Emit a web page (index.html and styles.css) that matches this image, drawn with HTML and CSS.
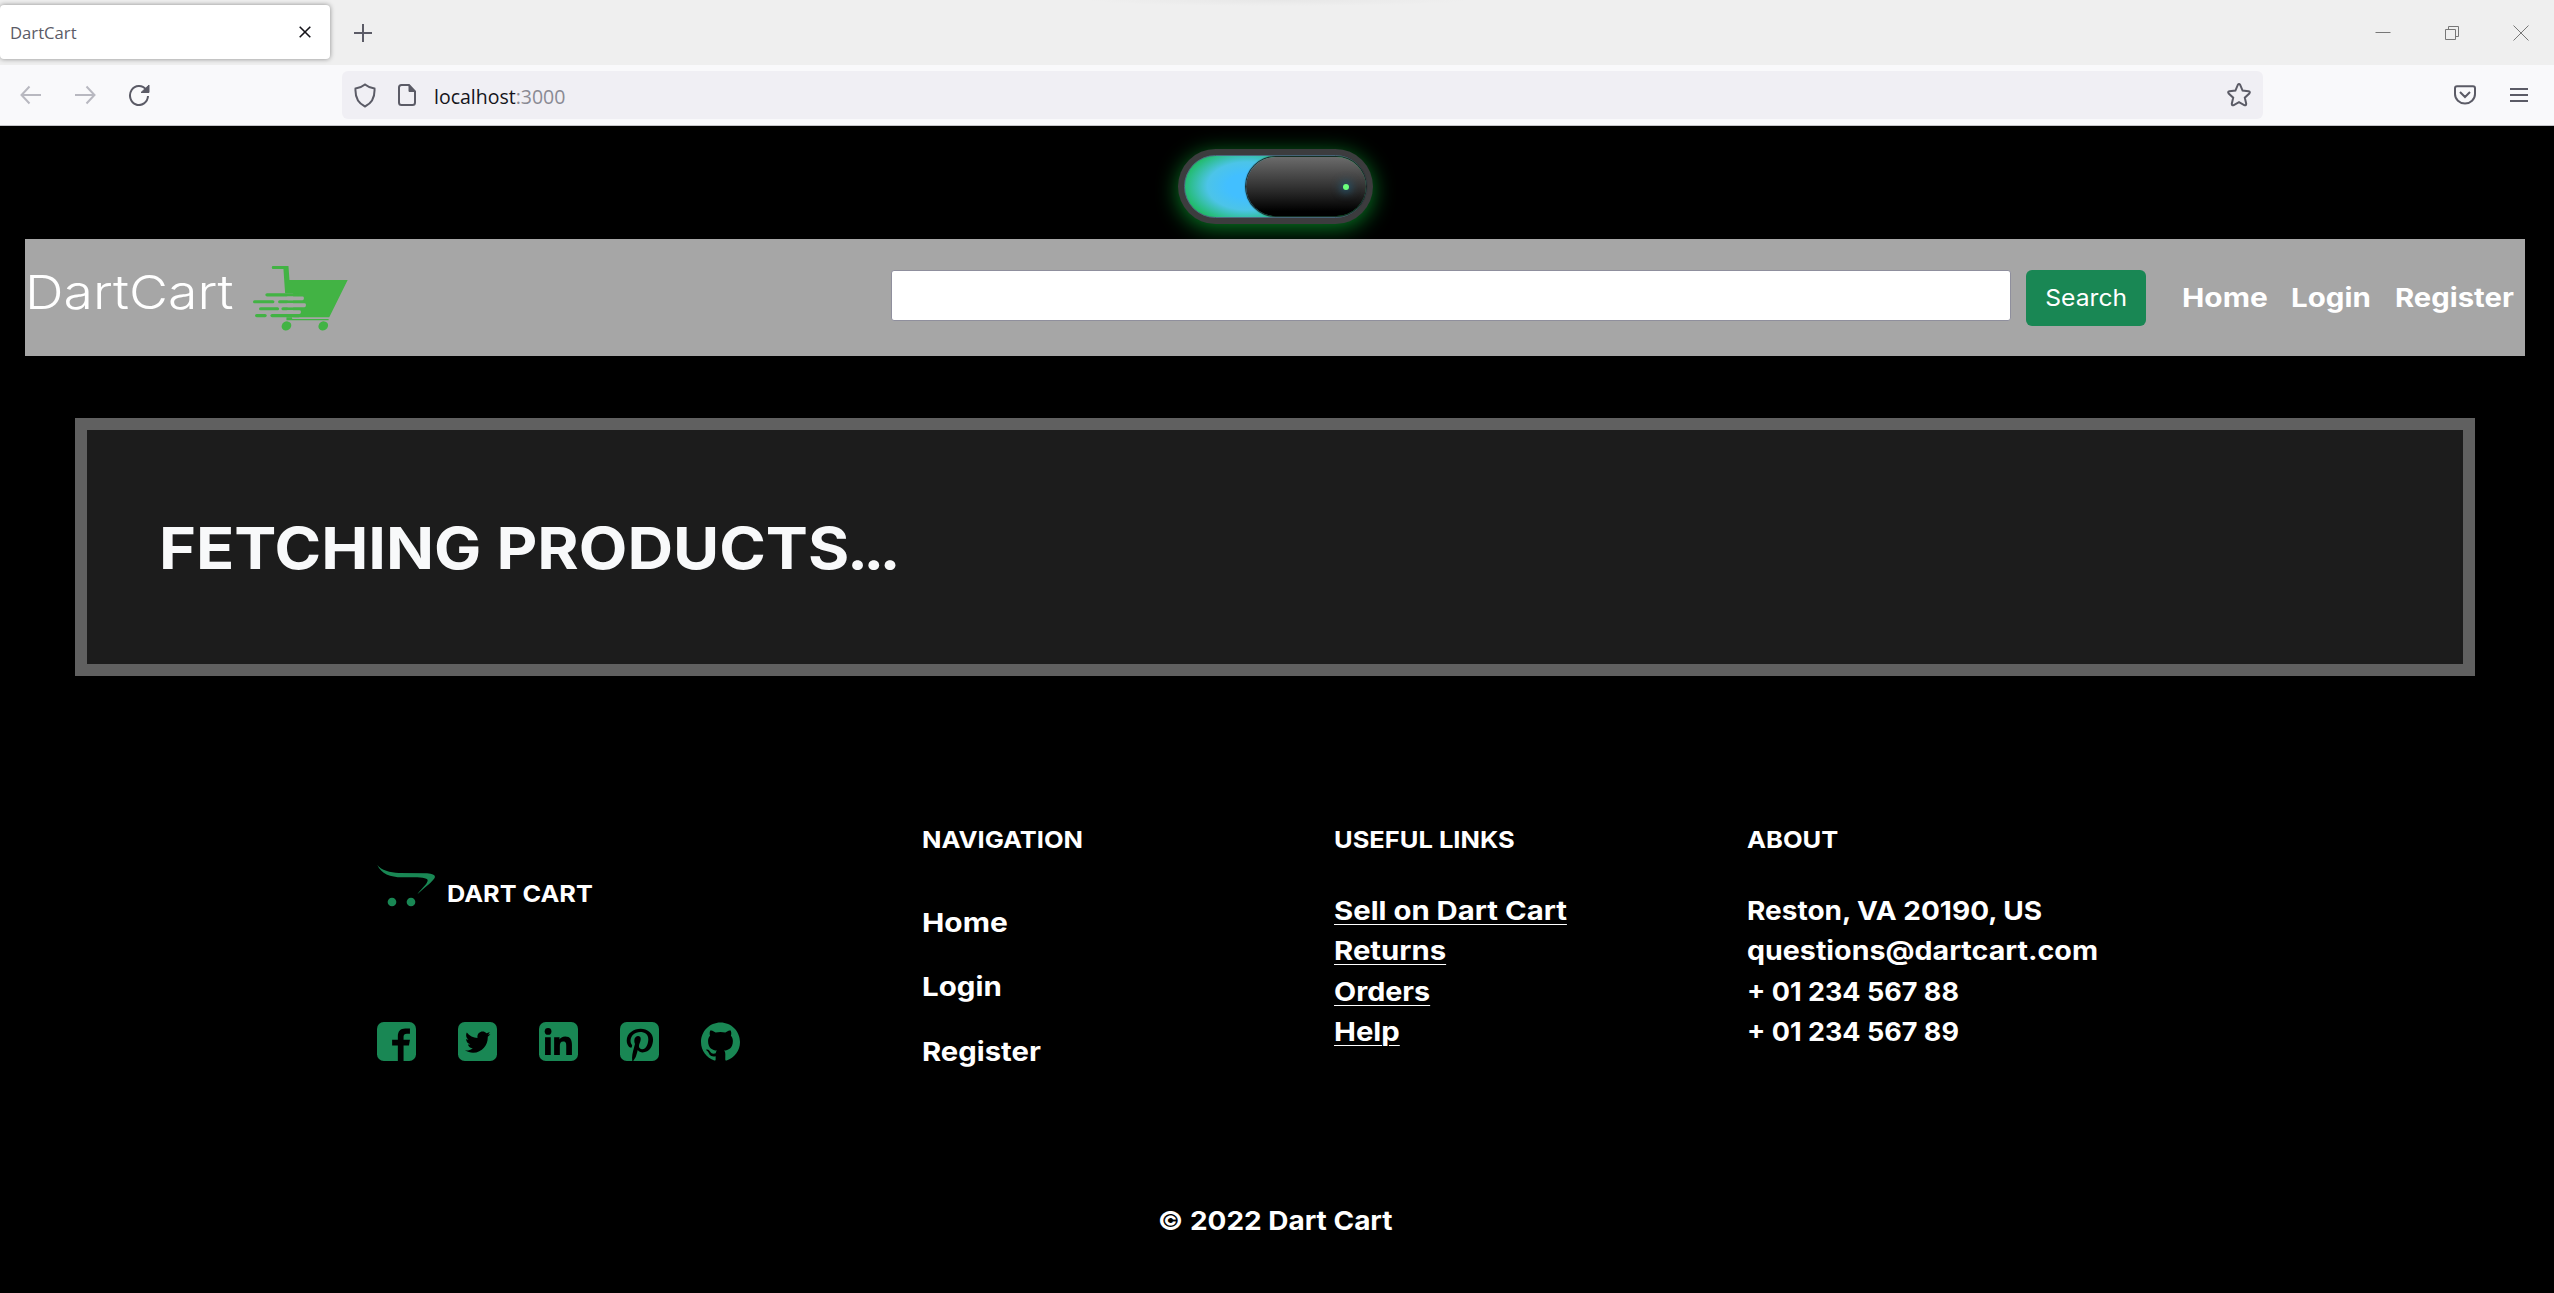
FILE: index.html
```html
<!DOCTYPE html>
<html lang="en">
<head>
<meta charset="utf-8">
<title>DartCart</title>
<link rel="stylesheet" href="styles.css">
</head>
<body>
<div class="browser">
  <div class="tabbar">
    <div class="tab"><span class="t tab-title">DartCart</span>
      <svg width="12" height="12" viewBox="0 0 12 12"><path d="M.7.7l10.6 10.6M11.3.7L.7 11.3"/></svg>
    </div>
    <svg class="new-tab" width="18" height="18" viewBox="0 0 18 18"><path d="M9 0v18M0 9h18"/></svg>
    <div class="window-buttons">
      <svg width="16" height="16" viewBox="0 0 16 16"><path d="M.5 7.5h15"/></svg>
      <svg width="16" height="16" viewBox="0 0 16 16"><path d="M1.500 4.500h10v10h-10zM4.500 4.500v-3h10v10h-3"/></svg>
      <svg width="16" height="16" viewBox="0 0 16 16"><path d="M.5.5l15 15M15.500.5l-15 15"/></svg>
    </div>
  </div>
  <div class="toolbar">
    <div class="nav-buttons">
      <svg class="dim" width="22" height="20" viewBox="0 0 22 20"><path d="M21 10H1.500M9.500 1.500L1.500 10l8 8.500"/></svg>
      <svg class="dim" width="22" height="20" viewBox="0 0 22 20"><path d="M1 10h19.500M12.500 1.500l8 8.500-8 8.500"/></svg>
      <svg width="22" height="22" viewBox="0 0 22 22"><path d="M18 5.500A9 9.500 0 1 0 20 12"/><path class="solid" d="M21 1v7.500h-8z"/></svg>
    </div>
    <div class="urlbar">
      <svg width="22" height="25" viewBox="0 0 22 25"><path d="M11 1.500C8.500 3.600 5 5 1.500 5.500 1 14 3.500 20 11 23.500 18.500 20 21 14 20.500 5.500 17 5 13.500 3.600 11 1.500z"/></svg>
      <svg class="page-icon" width="18" height="22" viewBox="0 0 18 22"><path d="M11 1H3.500Q1 1 1 3.500v15Q1 21 3.500 21h11q2.500 0 2.500-2.500V7.500z"/><path class="solid" d="M11 1v6.500h6z"/></svg>
      <span class="t url"><span class="host">localhost</span>:3000</span>
      <svg class="star" width="24" height="24" viewBox="0 0 24 24"><path d="M10.800 1.900q1.200-1.600 2.400 0l2.400 5.700 5.900.6q2.200.6.800 2.300l-4.500 4.200 1.400 6q0 2.200-2 1.400L12 19.200l-5.200 2.900q-2 .8-2-1.400l1.400-6-4.500-4.200q-1.400-1.700.8-2.300l5.900-.6z"/></svg>
    </div>
    <div class="toolbar-end">
      <svg width="22" height="20" viewBox="0 0 22 20"><path d="M3 1.200h16q2 0 2 2V9a10 9.500 0 0 1-20 0V3.200q0-2 2-2zM6 7l5 5 5-5"/></svg>
      <svg width="18" height="16" viewBox="0 0 18 16"><path d="M0 2h18M0 8h18M0 14h18"/></svg>
    </div>
  </div>
</div>

<div class="page">
  <div class="toggle"><div class="toggle-track"><div class="toggle-knob"><span class="toggle-dot"></span></div></div></div>

  <nav class="navbar">
    <div class="brand"><span class="t brand-name">DartCart</span></div>
    <svg class="brand-cart" width="95" height="65" viewBox="0 0 284 194">
      <g fill="#42b344">
        <path d="M58 0H106L109 42H283L228 153H120V81H96L91 9H58Q54 4 58 0z"/>
        <rect x="37" y="81" width="100" height="10" rx="5"/>
        <rect x="0" y="102" width="64" height="9" rx="4.500"/><rect x="75" y="102" width="80" height="9" rx="4.500"/>
        <rect x="18" y="123" width="60" height="9" rx="4.500"/><rect x="85" y="123" width="60" height="9" rx="4.500"/>
        <rect x="6" y="143" width="35" height="10" rx="5"/><rect x="52" y="143" width="90" height="10" rx="5"/>
        <path d="M100 153h17v5h109v4H100z"/>
        <ellipse cx="100" cy="179" rx="15" ry="13" transform="rotate(-35 100 179)"/><ellipse cx="210" cy="179" rx="15" ry="13" transform="rotate(-35 210 179)"/>
      </g>
      <g fill="#a6a6a6">
        <rect x="100" y="91" width="52" height="11" rx="4"/><rect x="100" y="111" width="58" height="12" rx="4"/><rect x="100" y="132" width="43" height="11" rx="4"/>
      </g>
    </svg>
    <div class="search-box"></div>
    <button class="search-button"><span class="t search">Search</span></button>
    <div class="nav-links"><a class="t home">Home</a><a class="t login">Login</a><a class="t register">Register</a></div>
  </nav>

  <section class="panel"><h1 class="t fetch">FETCHING PRODUCTS<span class="dots">...</span></h1></section>

  <footer class="footer">
    <div class="col-brand">
      <div class="dart">
        <svg width="58" height="42" viewBox="0 0 174 126" fill="#198754"><path d="M1 0C12 16 40 23 65 24L150 25Q174 27 174 36C172 47 140 69 121 88 136 67 152 57 152 46 151 38 130 37 100 37L75 37C40 37 12 26 1 0z"/><circle cx="45" cy="111" r="13"/><circle cx="102" cy="111" r="13"/></svg>
        <span class="t head dartcart">DART CART</span>
      </div>
      <div class="social">
        <svg viewBox="0 0 116 116"><rect width="116" height="116" rx="20"/><path class="cut" d="M62 116V70H45V53H62V42C62 27 70 19 84 19H98V35H89C82 35 79 38 79 44V53H98L95 70H79V116z"/></svg>
        <svg viewBox="0 0 116 116"><rect width="116" height="116" rx="20"/><path class="cut" transform="translate(21 21) scale(.147 .152)" d="M459.370 151.716c.325 4.548.325 9.097.325 13.645 0 138.720-105.583 298.558-298.558 298.558-59.452 0-114.680-17.219-161.137-47.106 8.447.974 16.568 1.299 25.340 1.299 49.055 0 94.213-16.568 130.274-44.832-46.132-.975-84.792-31.188-98.112-72.772 6.498.974 12.995 1.624 19.818 1.624 9.421 0 18.843-1.300 27.614-3.573-48.081-9.747-84.143-51.980-84.143-102.985v-1.299c13.969 7.797 30.214 12.670 47.431 13.319-28.264-18.843-46.781-51.005-46.781-87.391 0-19.492 5.197-37.360 14.294-52.954 51.655 63.675 129.300 105.258 216.365 109.807-1.624-7.797-2.599-15.918-2.599-24.040 0-57.828 46.782-104.934 104.934-104.934 30.213 0 57.502 12.670 76.670 33.137 23.715-4.548 46.456-13.320 66.599-25.340-7.798 24.366-24.366 44.833-46.132 57.827 21.117-2.273 41.584-8.122 60.426-16.243-14.292 20.791-32.161 39.308-52.628 54.253z"/></svg>
        <svg viewBox="0 0 116 116"><rect width="116" height="116" rx="20"/><g class="cut"><circle cx="27" cy="28" r="10"/><path d="M18 45h17v53H18zM45 45h16v7c3-5 8-9 17-9 15 0 20 10 20 25v30H81V71c0-8-1-13-9-13s-10 6-10 13v27H45z"/></g></svg>
        <svg viewBox="0 0 116 116"><rect width="116" height="116" rx="20"/><path class="cut" transform="translate(20 19) scale(.204 .195)" d="M204 6.500C101.400 6.500 0 74.900 0 185.600 0 256 39.600 296 63.600 296c9.900 0 15.600-27.600 15.600-35.400 0-9.300-23.700-29.100-23.700-67.800 0-80.400 61.200-137.400 140.400-137.400 68.100 0 118.500 38.700 118.500 109.800 0 53.100-21.300 152.700-90.300 152.700-24.900 0-46.200-18-46.200-43.800 0-37.800 26.400-74.400 26.400-113.400 0-66.200-93.900-54.200-93.900 25.800 0 16.800 2.100 35.400 9.600 50.700-13.800 59.400-42 147.900-42 209.100 0 18.900 2.700 37.500 4.500 56.400 3.400 3.800 1.700 3.400 6.900 1.500 50.400-69 48.600-82.500 71.400-172.800 12.300 23.400 44.100 36 69.300 36 106.200 0 153.900-103.500 153.900-196.800C384 71.300 298.200 6.500 204 6.500z"/></svg>
        <svg viewBox="0 0 24 24"><path d="M12 .297c-6.630 0-12 5.373-12 12 0 5.303 3.438 9.800 8.205 11.385.6.113.82-.258.82-.577 0-.285-.01-1.040-.015-2.040-3.338.724-4.042-1.610-4.042-1.610C4.422 18.070 3.633 17.700 3.633 17.700c-1.087-.744.084-.729.084-.729 1.205.084 1.838 1.236 1.838 1.236 1.070 1.835 2.809 1.305 3.495.998.108-.776.417-1.305.76-1.605-2.665-.3-5.466-1.332-5.466-5.930 0-1.310.465-2.380 1.235-3.220-.135-.303-.54-1.523.105-3.176 0 0 1.005-.322 3.300 1.230.96-.267 1.980-.399 3-.405 1.020.006 2.040.138 3 .405 2.280-1.552 3.285-1.230 3.285-1.230.645 1.653.24 2.873.12 3.176.765.84 1.230 1.910 1.230 3.220 0 4.610-2.805 5.625-5.475 5.920.42.36.81 1.096.81 2.220 0 1.606-.015 2.896-.015 3.286 0 .315.21.69.825.57C20.565 22.092 24 17.592 24 12.297c0-6.627-5.373-12-12-12"/></svg>
      </div>
    </div>
    <div class="col-nav">
      <h6 class="t head">NAVIGATION</h6>
      <a class="t home">Home</a><a class="t login">Login</a><a class="t register">Register</a>
    </div>
    <div class="col-list links">
      <h6 class="t head">USEFUL LINKS</h6>
      <a class="t">Sell on Dart Cart</a><a class="t">Returns</a><a class="t orders">Orders</a><a class="t">Help</a>
    </div>
    <div class="col-list">
      <h6 class="t head">ABOUT</h6>
      <span class="t city">Reston, VA 20190, US</span><span class="t mail">questions@dartcart.com</span><span class="t phone">+ 01 234 567 88</span><span class="t phone">+ 01 234 567 89</span>
    </div>
  </footer>
  <div class="copyright"><span class="t copy">© 2022 Dart Cart</span></div>
</div>
</body>
</html>
```
FILE: styles.css
```css
* { box-sizing: border-box; }
body { margin: 0; width: 2554px; height: 1293px; overflow: hidden; background: #000; color: #fff; font-family: Inter, "Liberation Sans", sans-serif; font-weight: 700; font-size: 26px; }
svg { display: block; flex: none; }
h1, h6 { margin: 0; font-weight: 700; }

/* Wide letterforms: each label is stretched from its left edge */
.t { --wide: 1; display: inline-block; white-space: nowrap; transform: scaleX(var(--wide)); transform-origin: 0 50%; }
.home { --wide: 1.15; }
.login { --wide: 1.135; }
.register { --wide: 1.125; }
.links a { --wide: 1.127; }
.links .orders { --wide: 1.105; }
.head, .links .head { --wide: 1.085; }
.city { --wide: 1.077; }
.mail { --wide: 1.1; }
.phone { --wide: 1.038; }

.browser { height: 126px; background: #f9f9fb; border-bottom: 1px solid #c4c4c8; font-family: "Open Sans", "Noto Sans", sans-serif; font-weight: 400; }
.browser svg { fill: none; stroke: #5b5b66; stroke-width: 2; }
.browser svg .solid { fill: #5b5b66; stroke-width: 1; }
.tabbar { height: 65px; background: radial-gradient(ellipse 190px 6px at 1278px 0, #e7e7e7, #efefef); display: flex; align-items: center; }
.tab { width: 330px; height: 54px; margin-top: -1px; background: #fff; border-radius: 4px; box-shadow: 0 0 5px rgba(0,0,0,.42); display: flex; align-items: center; justify-content: space-between; padding: 0 19px 0 10px; }
.tab-title { --wide: .98; font-size: 17px; color: #5b5b66; }
.browser .tab svg { stroke: #15141a; stroke-width: 1.6; }
.new-tab { margin-left: 24px; }
.window-buttons { display: flex; gap: 53px; margin-left: auto; padding-right: 25px; }
.browser .window-buttons svg { stroke: #777; stroke-width: 1; }
.toolbar { height: 60px; display: flex; align-items: center; }
.nav-buttons { width: 342px; display: flex; align-items: center; gap: 32px; padding-left: 20px; }
.browser .dim { stroke: #b8b8c0; }
.urlbar { width: 1921px; height: 48px; background: #f0eff4; border-radius: 6px; display: flex; align-items: center; padding: 0 12px; }
.page-icon { margin-left: 22px; }
.url { --wide: .975; margin: 2px 0 0 18px; font-size: 20px; color: #8a8a93; }
.host { color: #15141a; }
.star { margin-left: auto; }
.toolbar-end { margin-left: auto; display: flex; align-items: center; gap: 34px; padding-right: 26px; }

.page { display: flex; flex-direction: column; }
.toggle { align-self: center; margin: 23px 3px 15px 0; width: 195px; height: 75px; padding: 6px; border-radius: 38px; background: #3c3c3e; box-shadow: 0 4px 22px #087d25; }
.toggle-track { height: 63px; padding: 1px 0 1px 1px; border-radius: 32px; border: 1px solid #4b6b82; background: radial-gradient(ellipse 66px 40px at 62px 30px, #42bfff 30%, #4cc4e8 60%, #1cba5c 100%); display: flex; justify-content: flex-end; }
.toggle-knob { width: 120px; height: 59px; border-radius: 30px; background: linear-gradient(#6b6b6b, #333 50%, #000 92%); box-shadow: 0 0 1px 1px #15201c; display: flex; align-items: center; justify-content: flex-end; padding-right: 17px; }
.toggle-dot { width: 6px; height: 6px; border-radius: 50%; background: #6bff7b; box-shadow: 0 0 9px 3px #25546b; }

.navbar { height: 117px; margin: 0 29px 0 25px; background: #a6a6a6; display: flex; align-items: flex-start; }
.brand { width: 228px; }
.brand-name { --wide: 1.14; font-size: 47px; font-weight: 300; line-height: 106px; }
.brand-cart { margin-top: 27px; }
.search-box { width: 1120px; height: 51px; margin: 31px 15px 0 543px; background: #fff; border: 1px solid #8f8f9d; border-radius: 3px; }
.search-button { width: 120px; height: 56px; margin-top: 31px; padding: 0; border: 0; border-radius: 6px; background: #198754; color: #fff; font: 400 23px/54px Inter, sans-serif; }
.search { --wide: 1.07; transform-origin: 50% 50%; }
.nav-links { display: grid; grid-template-columns: 109px 104px auto; justify-items: start; margin-left: 36px; line-height: 117px; }

.panel { height: 258px; margin: 62px 79px 0 75px; border: 12px solid #606060; background: #1c1c1c; padding-left: 72px; }
.fetch { --wide: 1.088; font-size: 58px; line-height: 236px; color: #f8f9fa; }
.dots { letter-spacing: -4.500px; margin-left: -2px; }

.footer { padding: 148px 0 0 377px; display: grid; grid-template-columns: 545px 412px 413px auto; height: 515px; }
.head { font-size: 23.500px; line-height: 32px; }
.dart { display: flex; gap: 12px; margin-top: 41px; }
.dartcart { --wide: 1.075; margin-top: 13px; }
.social { display: flex; gap: 42px; margin-top: 112px; }
.social svg { width: 39px; height: 39px; fill: #198754; }
.social .cut { fill: #000; }
.col-nav, .col-list { display: flex; flex-direction: column; align-items: flex-start; }
.col-nav a { line-height: 32px; margin-bottom: 32px; }
.col-nav .login { margin-bottom: 33px; }
.col-nav h6 { margin-bottom: 51px; }
.col-list h6 { margin-bottom: 35px; }
.col-list a, .col-list span { line-height: 40.400px; }
.links a { text-decoration: underline; text-decoration-thickness: 1px; text-underline-offset: 4px; }
.copyright { text-align: center; line-height: 60px; padding-right: 4px; }
.copy { --wide: 1.075; transform-origin: 50% 50%; }
```
